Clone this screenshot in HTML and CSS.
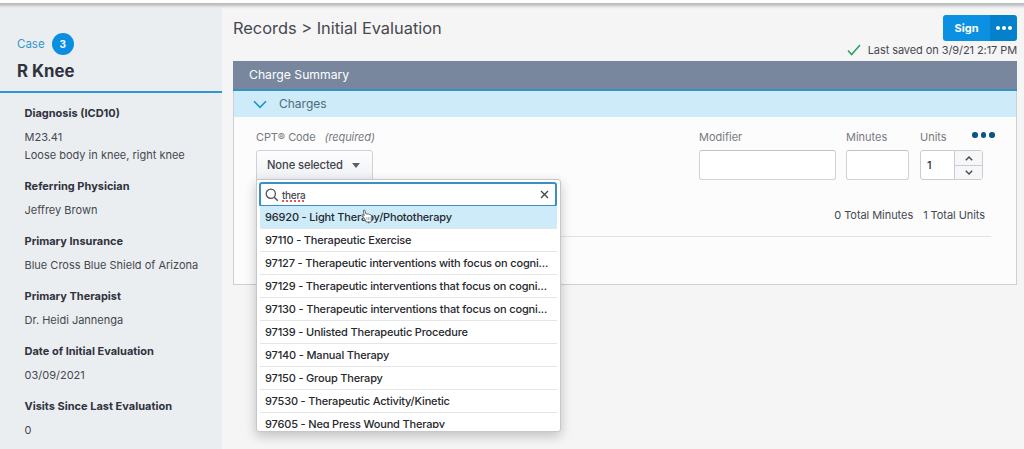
FILE: index.html
```html
<!DOCTYPE html>
<html lang="en">
<head>
    <meta charset="UTF-8">
    <meta name="viewport" content="width=device-width, initial-scale=1.0">
    <title>Initial Evaluation</title>
    <link rel="stylesheet" href="styles.css">
</head>
<body>
    <div class="top-bar"></div>
    <div class="page">
        <aside class="sidebar">
            <div class="case-header">
                <div class="case-line">
                    <a class="case-link">Case</a>
                    <span class="case-count">3</span>
                </div>
                <h1>R Knee</h1>
            </div>
            <dl class="case-details">
                <dt>Diagnosis (ICD10)</dt>
                <dd>M23.41</dd>
                <dd>Loose body in knee, right knee</dd>
                <dt>Referring Physician</dt>
                <dd>Jeffrey Brown</dd>
                <dt>Primary Insurance</dt>
                <dd>Blue Cross Blue Shield of Arizona</dd>
                <dt>Primary Therapist</dt>
                <dd>Dr. Heidi Jannenga</dd>
                <dt>Date of Initial Evaluation</dt>
                <dd>03/09/2021</dd>
                <dt>Visits Since Last Evaluation</dt>
                <dd>0</dd>
            </dl>
        </aside>

        <main class="content">
            <div class="content-header">
                <h2>Records &gt; Initial Evaluation</h2>
                <div class="actions">
                    <div class="sign-group">
                        <button class="sign">Sign</button>
                        <button class="sign-more"><i></i><i></i><i></i></button>
                    </div>
                    <div class="saved">
                        <svg width="14" height="12" viewBox="0 0 14 12"><path d="M1 6.6 L4.6 10.6 L13 1" fill="none" stroke="#27a060" stroke-width="1.5"/></svg>
                        <span>Last saved on 3/9/21 2:17 PM</span>
                    </div>
                </div>
            </div>

            <section class="panel">
                <div class="panel-title">Charge Summary</div>
                <div class="panel-subtitle">
                    <svg width="14" height="9" viewBox="0 0 14 9"><path d="M1 1.2 L7 7.4 L13 1.2" fill="none" stroke="#1c93cd" stroke-width="1.6"/></svg>
                    <span>Charges</span>
                </div>
                <div class="panel-body">
                    <div class="charge-row">
                        <div class="field code">
                            <label>CPT® Code <em>(required)</em></label>
                            <button class="select">None selected <span class="caret"></span></button>
                            <div class="dropdown">
                                <div class="search">
                                    <svg width="14" height="14" viewBox="0 0 14 14"><circle cx="5.8" cy="5.8" r="4.6" fill="none" stroke="#4d5055" stroke-width="1.3"/><path d="M9.2 9.2 L12.8 12.8" stroke="#4d5055" stroke-width="1.4"/></svg>
                                    <span class="query"><u>thera</u></span>
                                    <svg class="clear" width="9" height="9" viewBox="0 0 9 9"><path d="M1 1 L8 8 M8 1 L1 8" stroke="#45484d" stroke-width="1.4"/></svg>
                                </div>
                                <ul class="options">
                                    <li class="active">96920 - Light Therapy/Phototherapy</li>
                                    <li>97110 - Therapeutic Exercise</li>
                                    <li>97127 - Therapeutic interventions with focus on cogni...</li>
                                    <li>97129 - Therapeutic interventions that focus on cogni...</li>
                                    <li>97130 - Therapeutic interventions that focus on cogni...</li>
                                    <li>97139 - Unlisted Therapeutic Procedure</li>
                                    <li>97140 - Manual Therapy</li>
                                    <li>97150 - Group Therapy</li>
                                    <li>97530 - Therapeutic Activity/Kinetic</li>
                                    <li>97605 - Neg Press Wound Therapy</li>
                                </ul>
                                <svg class="pointer" width="12" height="14" viewBox="0 0 12 14"><path d="M3 8.5 L1 6.6 Q0.5 5.6 1.6 5.4 L3.2 6.6 L2.4 1.8 Q2.6 0.5 3.8 1.2 L5 5 Q6 4.2 6.8 5.2 Q8 4.6 8.5 5.6 Q10 5.2 10.4 6.6 L10.8 9.5 L10 13 H5 Z" fill="#fff" stroke="#55606a" stroke-width="0.9"/><path d="M5.8 8 V11 M7.4 8 V11 M9 8 V11" stroke="#7b858c" stroke-width="0.6"/></svg>
                            </div>
                        </div>
                        <div class="field modifier">
                            <label>Modifier</label>
                            <input type="text">
                        </div>
                        <div class="field minutes">
                            <label>Minutes</label>
                            <input type="text">
                        </div>
                        <div class="field units">
                            <label>Units</label>
                            <div class="stepper">
                                <span class="amount">1</span>
                                <div class="steps">
                                    <span><svg width="8" height="5" viewBox="0 0 8 5"><path d="M0.8 4.2 L4 1 L7.2 4.2" fill="none" stroke="#45484d" stroke-width="1.4"/></svg></span>
                                    <span><svg width="8" height="5" viewBox="0 0 8 5"><path d="M0.8 0.8 L4 4 L7.2 0.8" fill="none" stroke="#45484d" stroke-width="1.4"/></svg></span>
                                </div>
                            </div>
                            <div class="row-menu"><i></i><i></i><i></i></div>
                        </div>
                    </div>
                    <div class="totals">
                        <span>0 Total Minutes</span>
                        <span>1 Total Units</span>
                    </div>
                </div>
            </section>
        </main>
    </div>
</body>
</html>
```
FILE: styles.css
```css
* {
    box-sizing: border-box;
}
body {
    margin: 0;
    height: 449px;
    overflow: hidden;
    background-color: #f5f5f6;
    color: #45484f;
    font-family: Inter, "Liberation Sans", sans-serif;
    font-size: 11px;
    line-height: 18px;
}
h1, h2, dl, dd, ul {
    margin: 0;
    padding: 0;
}
button {
    font-family: inherit;
    border: none;
    padding: 0;
}
.top-bar {
    position: relative;
    height: 9px;
    background: linear-gradient(#fff 0, #fff 2.5px, #bcbdbf 3.5px, #c3c4c6 5px, #e5e7e9 7px, rgba(240, 241, 243, 0));
}
.page {
    display: flex;
    height: 449px;
    margin-top: -9px;
}

/* Sidebar */
.sidebar {
    width: 222px;
    background-color: #ebeef1;
}
.case-header {
    height: 93px;
    padding: 33px 17px 0;
    border-bottom: 2px solid #2e97cf;
}
.case-line {
    display: flex;
    align-items: center;
    gap: 7px;
    height: 22px;
}
.case-link {
    color: #3299cc;
    font-size: 11.5px;
}
.case-count {
    width: 22px;
    height: 22px;
    border-radius: 50%;
    background-color: #0a8fe0;
    color: #fff;
    font-size: 10px;
    font-weight: bold;
    line-height: 22px;
    text-align: center;
}
h1 {
    margin-top: 5px;
    color: #30323d;
    font-size: 16.8px;
    font-weight: 700;
    line-height: 22px;
}
.case-details {
    padding: 11px 24.5px;
}
dt {
    margin-bottom: 6px;
    color: #30323d;
    font-weight: 700;
    font-size: 11px;
}
dd + dt {
    margin-top: 13px;
}
dd {
    white-space: nowrap;
}

/* Main area */
.content {
    flex: 1;
    padding: 15px 7px 0 11px;
}
.content-header {
    display: flex;
    justify-content: space-between;
    height: 46px;
}
h2 {
    padding-top: 2px;
    font-size: 16.4px;
    font-weight: 400;
    line-height: 22px;
}
.actions {
    display: flex;
    flex-direction: column;
    align-items: flex-end;
}
.sign-group {
    display: flex;
    height: 26px;
    border-radius: 3px;
    overflow: hidden;
}
.sign {
    width: 47px;
    background-color: #0b90e2;
    color: #fff;
    font-size: 11px;
    font-weight: 700;
}
.sign-more {
    display: flex;
    align-items: center;
    justify-content: center;
    gap: 2px;
    width: 27px;
    background-color: #0580cc;
}
.sign-more i {
    width: 4px;
    height: 4px;
    border-radius: 50%;
    background-color: #fff;
}
.saved {
    display: flex;
    align-items: center;
    gap: 7px;
    height: 18px;
    letter-spacing: -0.08px;
}
.panel {
    height: 224px;
    border: 1px solid #cdd0d6;
    border-top: none;
    background-color: #fcfcfd;
}
.panel-title {
    height: 30px;
    margin: 0 -1px;
    padding-left: 16px;
    border-bottom: 2px solid #3790c4;
    background-color: #78879d;
    color: #fff;
    font-size: 12.2px;
    line-height: 28px;
}
.panel-subtitle {
    display: flex;
    align-items: center;
    gap: 12px;
    height: 26px;
    padding-left: 19px;
    background-color: #cdebf9;
    color: #506a7c;
    font-size: 12px;
}
.panel-body {
    padding: 11px 25px 0 22px;
}
.charge-row {
    display: flex;
}
.field {
    position: relative;
}
.field label {
    display: block;
    height: 22px;
    color: #777a80;
}
.field em {
    margin-left: 6px;
    letter-spacing: -0.1px;
}
.code {
    width: 443px;
}
.code label {
    letter-spacing: -0.1px;
}
.modifier {
    width: 137px;
    margin-right: 10px;
}
.minutes {
    width: 63px;
    margin-right: 11px;
}
.units {
    width: 63px;
}
.field input {
    display: block;
    width: 100%;
    height: 30px;
    border: 1px solid #d2d3d7;
    border-top-color: #c2c3c7;
    border-radius: 3px;
    background-color: #fff;
}
.select {
    display: flex;
    align-items: center;
    justify-content: space-between;
    width: 117px;
    height: 30px;
    padding: 0 12px 0 10px;
    border: 1px solid #d0d1d6;
    border-radius: 3px 3px 0 0;
    background: linear-gradient(#fdfdfe, #f0f2f5);
    color: #40434a;
    font-size: 11.2px;
    font-weight: 500;
    letter-spacing: -0.1px;
}
.caret {
    border: 4px solid transparent;
    border-top: 5px solid #55606d;
    border-bottom: none;
}
.stepper {
    display: flex;
    height: 30px;
    border: 1px solid #cbccd1;
    border-radius: 3px;
    background-color: #fff;
}
.amount {
    width: 33px;
    padding-left: 6px;
    color: #303237;
    font-weight: 500;
    line-height: 28px;
}
.steps {
    flex: 1;
    border-left: 1px solid #cbccd1;
    background-color: #f6f7f9;
}
.steps span {
    display: flex;
    align-items: center;
    justify-content: center;
    height: 14px;
}
.steps span + span {
    border-top: 1px solid #cbccd1;
}
.row-menu {
    position: absolute;
    top: 4px;
    left: 52px;
    display: flex;
    gap: 3px;
}
.row-menu i {
    width: 5.5px;
    height: 5.5px;
    border-radius: 50%;
    background-color: #0c5482;
}
.totals {
    display: flex;
    justify-content: flex-end;
    gap: 10px;
    height: 57px;
    padding: 26px 6px 0 0;
    border-bottom: 1px solid #e1e2e4;
    letter-spacing: -0.06px;
}

/* Code dropdown */
.dropdown {
    position: absolute;
    z-index: 1;
    top: 51px;
    left: 0;
    width: 305px;
    height: 253px;
    padding: 3px;
    border: 1px solid #c5c7cb;
    border-radius: 0 3px 3px 3px;
    background-color: #fff;
    box-shadow: 0 4px 12px rgba(0, 0, 0, 0.22);
}
.search {
    display: flex;
    align-items: center;
    height: 25px;
    margin: -1px 0 -1px -1px;
    padding: 0 6px 0 4px;
    border: 2px solid #3b8fc6;
    border-radius: 3px;
}
.query {
    flex: 1;
    margin-left: 3px;
    font-size: 10px;
    font-weight: 500;
    letter-spacing: -0.3px;
    line-height: 14px;
}
.query u {
    text-decoration: underline dotted #e05a5a 1.5px;
    text-decoration-skip-ink: none;
    text-underline-offset: 2px;
}
.options {
    height: 222px;
    overflow: hidden;
    list-style: none;
}
.options li {
    height: 23px;
    padding-left: 5px;
    border-bottom: 1px solid #e4e5e7;
    color: #26282d;
    font-weight: 500;
    letter-spacing: -0.17px;
    line-height: 23px;
    white-space: nowrap;
}
.options .active {
    background-color: #cdebf9;
}
.pointer {
    position: absolute;
    top: 29px;
    left: 104px;
}
```
